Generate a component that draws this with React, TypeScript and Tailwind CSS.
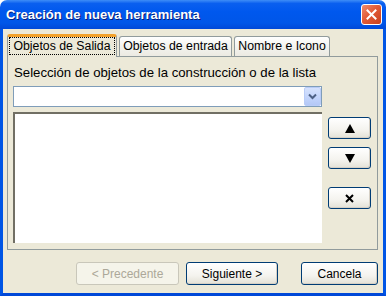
import React from "react";

const font = { fontFamily: '"Liberation Sans", Arial, sans-serif' };

function XpButton({
  children,
  className = "",
  disabled = false,
}: {
  children: React.ReactNode;
  className?: string;
  disabled?: boolean;
}) {
  return (
    <div
      className={
        "flex items-center justify-center rounded-[3px] border text-[12px] " +
        (disabled
          ? "border-[#C9C7BA] bg-[#F5F4EA] text-[#ACA899] "
          : "border-[#003C74] bg-[linear-gradient(to_bottom,#FFFFFF_0%,#F4F3EE_60%,#E3E1D6_100%)] text-black shadow-[inset_-1px_-1px_0_#D6D0C5] ") +
        className
      }
    >
      {children}
    </div>
  );
}

export default function App() {
  return (
    <div className="flex h-[296px] w-[386px] flex-col overflow-hidden" style={font}>
      {/* Title bar */}
      <div className="flex h-[29px] shrink-0 items-center justify-between rounded-t-[7px] bg-[linear-gradient(to_bottom,#3E8DF7_0%,#0A5FEF_12%,#0058EE_40%,#0056E8_80%,#0048D8_100%)] pl-[6px] pr-[4px]">
        <span className="text-[13px] font-bold text-white [text-shadow:1px_1px_0_#0A1E78]">
          Creación de nueva herramienta
        </span>
        <div className="mt-[-1px] flex h-[21px] w-[21px] items-center justify-center rounded-[3px] border border-white bg-[linear-gradient(135deg,#F08C6E_0%,#E25B37_45%,#C8401E_100%)]">
          <svg width="11" height="11" viewBox="0 0 11 11">
            <path d="M1.5 1.5 L9.5 9.5 M9.5 1.5 L1.5 9.5" stroke="white" strokeWidth="2" strokeLinecap="square" />
          </svg>
        </div>
      </div>

      {/* Body */}
      <div className="flex flex-1 flex-col border-x-[3px] border-b-[3px] border-x-[#0055E5] border-b-[#0048D8] bg-[#ECE9D8] px-[4px] pt-[5px]">
        {/* Tabs */}
        <div className="flex items-end">
          <div className="z-10 mb-[-1px] flex h-[23px] w-[110px] items-start rounded-t-[3px] border-x border-t-[3px] border-x-[#919B9C] border-t-[#F2A22C] bg-[#ECE9D8] px-[1px] pt-[0px]">
            <span className="flex h-[18px] w-full items-center justify-center border border-dotted border-black text-[12.3px] text-black">
              Objetos de Salida
            </span>
          </div>
          <div className="ml-[2px] flex h-[20px] w-[113px] items-center justify-center rounded-t-[3px] border-x border-t border-[#919B9C] bg-[linear-gradient(to_bottom,#FFFFFF_0%,#F3F3EF_50%,#ECEAE2_100%)] text-[12.3px] text-black">
            Objetos de entrada
          </div>
          <div className="ml-[2px] flex h-[20px] w-[96px] items-center justify-center rounded-t-[3px] border-x border-t border-[#919B9C] bg-[linear-gradient(to_bottom,#FFFFFF_0%,#F3F3EF_50%,#ECEAE2_100%)] text-[12.3px] text-black">
            Nombre e Icono
          </div>
        </div>

        {/* Panel */}
        <div className="flex h-[194px] w-[371px] flex-col border border-[#919B9C] bg-[#ECE9D8] px-[5px] pt-[8px] pb-[5px]">
          <div className="h-[16px] pl-[1px] text-[13.2px] leading-[16px] text-black">
            Selección de objetos de la construcción o de la lista
          </div>
          <div className="mt-[5px] flex">
            <div className="flex w-[309px] flex-col">
              {/* Combo */}
              <div className="flex h-[21px] items-center justify-end border border-[#7F9DB9] bg-white">
                <div className="flex h-[19px] w-[17px] items-center justify-center rounded-[2px] border border-[#B9CCF7] bg-[linear-gradient(to_bottom,#D6E2FD_0%,#C1D3FB_60%,#B4C8F6_100%)]">
                  <svg width="9" height="7" viewBox="0 0 9 7">
                    <path d="M1 1.5 L4.5 5 L8 1.5" fill="none" stroke="#4D6185" strokeWidth="2" />
                  </svg>
                </div>
              </div>
              {/* List */}
              <div className="mt-[5px] h-[131px] border-l-2 border-t-2 border-[#716F64] bg-white" />
            </div>
            <div className="ml-[6px] flex flex-col pt-[31px]">
              <XpButton className="h-[22px] w-[43px]">
                <svg width="10" height="9" viewBox="0 0 10 9">
                  <path d="M5 0 L10 9 L0 9 Z" fill="black" />
                </svg>
              </XpButton>
              <XpButton className="mt-[8px] h-[22px] w-[43px]">
                <svg width="10" height="9" viewBox="0 0 10 9">
                  <path d="M0 0 L10 0 L5 9 Z" fill="black" />
                </svg>
              </XpButton>
              <XpButton className="mt-[18px] h-[22px] w-[43px]">
                <svg width="9" height="9" viewBox="0 0 9 9">
                  <path d="M1 1 L8 8 M8 1 L1 8" stroke="black" strokeWidth="2" />
                </svg>
              </XpButton>
            </div>
          </div>
        </div>

        {/* Bottom buttons */}
        <div className="mt-[12px] flex">
          <XpButton disabled className="ml-[69px] h-[23px] w-[103px]">
            &lt; Precedente
          </XpButton>
          <XpButton className="ml-[7px] h-[23px] w-[92px]">Siguiente &gt;</XpButton>
          <XpButton className="ml-[23px] h-[23px] w-[77px]">Cancela</XpButton>
        </div>
      </div>
    </div>
  );
}
